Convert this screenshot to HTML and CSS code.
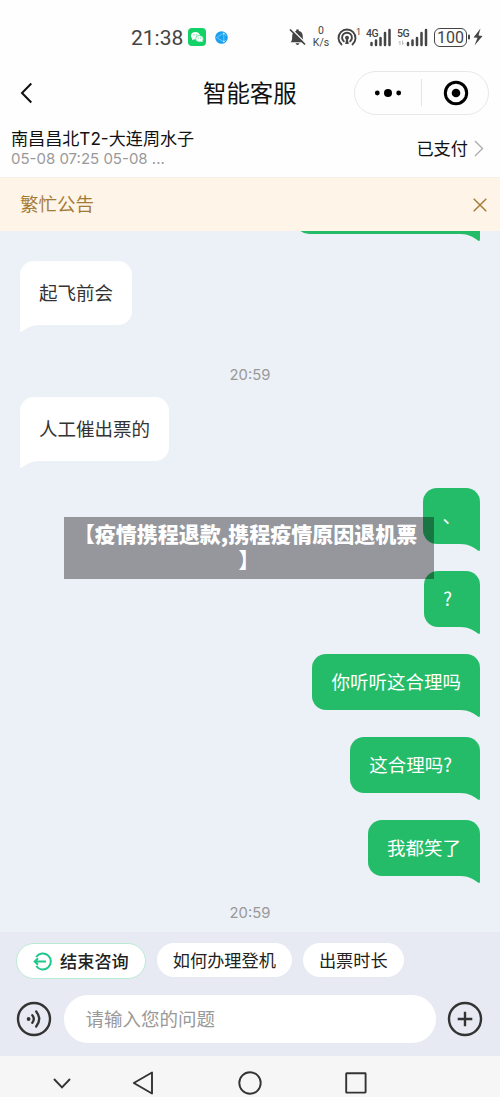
FILE: index.html
```html
<!DOCTYPE html>
<html lang="zh-CN">
<head>
<meta charset="utf-8">
<meta name="viewport" content="width=device-width, initial-scale=1">
<title>智能客服</title>
<link rel="stylesheet" href="styles.css">
</head>
<body>
<div class="phone">
  <header class="status">
    <span class="clock">21:38</span>
    <svg class="wechat" width="18" height="18" viewBox="0 0 18 18"><rect width="18" height="18" rx="4" fill="#12d267"/><ellipse cx="7.400" cy="7.700" rx="4.500" ry="3.800" fill="#fff"/><path d="M4.500 10l-.5 2.200 2.500-1.200z" fill="#fff"/><ellipse cx="11.500" cy="10.800" rx="3.900" ry="3.300" fill="#fff" stroke="#12d267" stroke-width=".6"/><path d="M12.500 13.300l2 1-.3-2z" fill="#fff"/><g fill="#12d267"><circle cx="5.900" cy="6.800" r=".6"/><circle cx="8.800" cy="6.800" r=".6"/><circle cx="10.200" cy="10.100" r=".5"/><circle cx="12.800" cy="10.100" r=".5"/></g></svg>
    <svg class="globe" width="13" height="13" viewBox="0 0 13 13"><circle cx="6.500" cy="6.500" r="6.300" fill="#1ba0ee"/><path d="M1.500 6.500L8.800 2.200V10.800zM8.800 2.200L11.500 5M8.800 10.800L11.300 9" fill="none" stroke="#7fd0fc" stroke-width=".8"/><circle cx="8.800" cy="2.500" r=".8" fill="#d8f3ff"/><circle cx="8.800" cy="10.500" r=".8" fill="#d8f3ff"/></svg>
    <span class="spacer"></span>
    <svg class="bell" width="17" height="18" viewBox="0 0 17 18"><path d="M1.500 14.200C3.500 12.600 3 10 3.200 7.400 3.500 4.700 5 3.300 7.200 2.900V1.500H9.800V2.900C12.300 3.400 13.600 5 13.700 7.600 13.800 10.500 13.800 12.700 15.500 14.200zM6.500 15.200H10.500Q10 17 8.500 17T6.500 15.200z" fill="#444"/><path d="M2.200 .8L17 15.600" stroke="#fff" stroke-width="1.400"/><path d="M1 1.500L16 16.500" stroke="#444" stroke-width="1.700"/></svg>
    <span class="speed"><span>0</span><span>K/s</span></span>
    <svg class="cast" width="24" height="20" viewBox="0 0 24 20"><g fill="none" stroke="#444" stroke-width="1.900" stroke-linecap="round"><path d="M4.500 17.500A8.500 8.500 0 1 1 15.500 17.500"/><path d="M6.800 14.300A4.900 4.900 0 1 1 13.200 14.300"/></g><circle cx="10" cy="10.800" r="2" fill="#444"/><path d="M9.200 12h1.600L11.800 17H8.200z" fill="#444"/><text x="19" y="8" class="cast-num">1</text></svg>
    <svg class="signal four" width="26" height="19" viewBox="0 0 26 19"><text x="0" y="9" class="net">4G</text><path d="M5.500 17v-2M10 17v-4.500M14.500 17v-7M19 17V5M23.500 17V2" stroke="#444" stroke-width="2.500" stroke-linecap="round" fill="none"/></svg>
    <svg class="signal five" width="31" height="19" viewBox="0 0 31 19"><text x="0" y="9" class="net">5G</text><path d="M3 17v-4l-1.300 1.500M5.500 12.500v4l1.300-1.500" stroke="#bbb" stroke-width="1" fill="none"/><path d="M11 17v-2M15.500 17v-4.500M20 17v-7M24.500 17V5M29 17V2" stroke="#444" stroke-width="2.500" stroke-linecap="round" fill="none"/></svg>
    <span class="battery">100</span>
    <svg class="bolt" width="15" height="18" viewBox="0 0 15 18"><rect x="0" y="6.500" width="2" height="5" rx="1" fill="#444"/><path d="M12.500 .5L5.500 9.500l4 .3L6.500 17.500l8-9.500-4-.5z" fill="#444"/></svg>
  </header>

  <nav class="titlebar">
    <svg class="back" width="14" height="22" viewBox="0 0 14 22"><path d="M11.300 1.500L2 11l9.300 9.500" fill="none" stroke="#111" stroke-width="2"/></svg>
    <h1 class="title">智能客服</h1>
    <div class="capsule">
      <svg width="28" height="10" viewBox="0 0 28 10"><circle cx="3.300" cy="5" r="2.400"/><circle cx="14" cy="5" r="4"/><circle cx="24.700" cy="5" r="2.400"/></svg>
      <span class="divider"></span>
      <svg width="26" height="26" viewBox="0 0 26 26"><circle cx="13" cy="13" r="10.700" fill="none" stroke="#000" stroke-width="3"/><circle cx="13" cy="13" r="4.300"/></svg>
    </div>
  </nav>

  <section class="trip">
    <div class="trip-info">
      <div class="route">南昌昌北T2-大连周水子</div>
      <div class="dates">05-08 07:25 05-08 ...</div>
    </div>
    <div class="paid">已支付<svg width="10" height="17" viewBox="0 0 10 17"><path d="M1 1l7.500 7.500L1 16" fill="none" stroke="#aaa" stroke-width="1.300"/></svg></div>
  </section>

  <section class="notice">
    <span class="notice-text">繁忙公告</span>
    <svg width="14" height="14" viewBox="0 0 14 14"><path d="M.7.7l12.600 12.600M13.300.7L.7 13.300" stroke="#a87d3b" stroke-width="1.500"/></svg>
  </section>

  <main class="chat">
    <div class="bubble sent clipped"></div>
    <div class="bubble received">起飞前会</div>
    <time class="stamp mid">20:59</time>
    <div class="bubble received">人工催出票的</div>
    <div class="bubble sent lead">、</div>
    <div class="bubble sent asking">?</div>
    <div class="bubble sent">你听听这合理吗</div>
    <div class="bubble sent asking">这合理吗?</div>
    <div class="bubble sent">我都笑了</div>
    <time class="stamp last">20:59</time>
    <div class="caption"><span class="caption-line">【疫情携程退款,携程疫情原因退机票</span><span class="caption-line end">】</span></div>
  </main>

  <footer class="composer">
    <div class="chips">
      <button class="chip finish"><svg width="19" height="19" viewBox="0 0 19 19"><path d="M3.200 5A8 8 0 1 1 3.200 14M13 9.500H2M5 6.300L1.700 9.500 5 12.700" fill="none" stroke="#22c58b" stroke-width="2"/></svg>结束咨询</button>
      <button class="chip">如何办理登机</button>
      <button class="chip">出票时长</button>
    </div>
    <div class="entry">
      <svg width="36" height="36" viewBox="0 0 36 36"><circle cx="18" cy="18" r="16" fill="none" stroke="#333" stroke-width="2.400"/><circle cx="12.600" cy="18" r="1.900" fill="#333"/><path d="M16.300 14.200Q19.300 18 16.300 21.800M20.200 10.500Q26.200 18 20.200 25.500" fill="none" stroke="#333" stroke-width="2.300" stroke-linecap="round"/></svg>
      <div class="field">请输入您的问题</div>
      <svg width="36" height="36" viewBox="0 0 36 36"><circle cx="18" cy="18" r="16" fill="none" stroke="#333" stroke-width="2.400"/><path d="M18 10.700v14.600M10.700 18h14.600" stroke="#333" stroke-width="2.400"/></svg>
    </div>
  </footer>

  <div class="system">
    <svg class="hide" width="18" height="11" viewBox="0 0 18 11"><path d="M1 1l8 8.300L17 1" fill="none" stroke="#333" stroke-width="1.900"/></svg>
    <svg class="prev" width="22" height="24" viewBox="0 0 22 24"><path d="M20 1.500v21L1.800 12z" fill="none" stroke="#333" stroke-width="1.900" stroke-linejoin="round"/></svg>
    <svg class="home" width="24" height="24" viewBox="0 0 24 24"><circle cx="12" cy="12" r="10.700" fill="none" stroke="#333" stroke-width="1.900"/></svg>
    <svg class="recent" width="22" height="22" viewBox="0 0 22 22"><rect x="1.200" y="1.200" width="19.400" height="19.400" rx=".5" fill="none" stroke="#333" stroke-width="1.900"/></svg>
  </div>
</div>
</body>
</html>
```
FILE: styles.css
```css
* { box-sizing: border-box; }
body { margin: 0; font-family: "Noto Sans CJK SC", sans-serif; color: #222; }
svg { display: block; flex: none; }
.phone { width: 500px; height: 1097px; display: flex; flex-direction: column; overflow: hidden; background: #fefefe; }

.status { height: 70px; flex: none; display: flex; align-items: center; padding: 4px 17px 0 131px; color: #444; }
.clock { font: 400 21px/26px Roboto, sans-serif; width: 57px; padding-top: 1px; white-space: nowrap; }
.globe { margin-left: 9px; }
.spacer { flex: 1; }
.speed { display: flex; flex-direction: column; align-items: center; width: 18px; margin: 0 7px 0 6px; font: 400 10.500px/12px Roboto, sans-serif; }
.cast-num { font: 9px Roboto, sans-serif; fill: #444; }
.signal { margin-left: 5px; }
.net { font: 500 10.500px Roboto, sans-serif; fill: #444; letter-spacing: -.5px; }
.battery { width: 33px; height: 19px; margin-left: 6px; border: 1.500px solid #444; border-radius: 6px; font: 400 16px/17px Roboto, sans-serif; text-align: center; }
.bolt { margin-left: 1px; }

.titlebar { height: 45px; flex: none; display: flex; align-items: center; padding: 0 11px 0 20px; }
.title { margin: 0 0 2px 169px; flex: 1; font-size: 23.400px; line-height: 34px; font-weight: 400; color: #111; }
.capsule { width: 135px; height: 44px; display: flex; align-items: center; padding: 0 19px; border: 1px solid #e8e8e8; border-radius: 22px; }
.divider { width: 1px; height: 27px; background: #e4e4e4; margin: 0 21px 0 19px; }

.trip { height: 62px; flex: none; display: flex; justify-content: space-between; align-items: center; padding: 6px 16px 0 11px; }
.route { font-family: Inter, "Noto Sans CJK SC", sans-serif; font-size: 17.100px; line-height: 20px; color: #111; }
.dates { font: 400 15px/20px Inter, sans-serif; color: #999; }
.paid { display: flex; align-items: center; gap: 6px; font-size: 17.200px; line-height: 24px; padding-bottom: 2px; color: #111; }

.notice { height: 54px; flex: none; display: flex; justify-content: space-between; align-items: center; padding: 0 13px 0 20px; background: #fef5e8; border-top: 1px solid #f5f1e9; color: #a47b35; font-size: 18.500px; }
.notice-text { padding-bottom: 3px; }

.chat { position: relative; height: 701px; flex: none; overflow: hidden; display: flex; flex-direction: column; padding: 0 20px; background: #ecf0f7; }
.bubble { position: relative; flex: none; width: max-content; padding: 0 19px; font-size: 18.500px; }
.bubble::after { content: ""; position: absolute; top: 100%; width: 20px; height: 7px; background: inherit; }
.received { height: 64px; line-height: 62px; border-radius: 14px 14px 14px 0; background: #fff; color: #333; }
.received::after { left: 0; clip-path: path("M20 0C11 0 7 3 2 6.500Q0 8 0 5V0Z"); }
.sent { height: 56px; line-height: 55px; margin-bottom: 27px; align-self: flex-end; border-radius: 14px 14px 0 14px; background: #25bc69; color: #fff; }
.sent::after { right: 0; clip-path: path("M0 0C9 0 13 3 18 6.500Q20 8 20 5V0Z"); }
.asking { padding-right: 28px; }
.clipped { width: 185px; margin-top: -53px; }
.stamp { align-self: center; height: 20px; font: 400 14.800px/20px Inter, sans-serif; color: #999; }
.mid { margin: 40px 0 12px; }
.lead { margin-top: 27px; }
.last { margin-top: 0; }
.caption { position: absolute; left: 64px; top: 286px; width: 370px; height: 62px; padding-top: 3px; display: flex; flex-direction: column; align-items: center; background: rgba(0,0,0,.37); color: #fff; font-size: 21px; font-weight: 900; line-height: 26px; white-space: nowrap; }
.caption-line { margin-right: 7px; }
.caption-line.end { margin-right: 0; }

.composer { height: 124px; flex: none; background: #e7eaf2; padding: 11px 16px 0; }
.chips { display: flex; gap: 11px; align-items: flex-start; }
.chip { height: 34px; padding: 0 16px; border: 0; border-radius: 17px; background: #fff; color: #222; font: 400 17.200px/32px "Noto Sans CJK SC", sans-serif; white-space: nowrap; }
.finish { height: 36px; padding: 0 16px; border: 1px solid #b9ebd3; border-radius: 18px; display: flex; align-items: center; gap: 8px; font-weight: 500; }
.entry { display: flex; align-items: center; justify-content: space-between; margin: 16px 1px 0 0; }
.field { width: 372px; height: 48px; padding-left: 22px; border-radius: 24px; background: #fff; color: #999; font-size: 18.500px; line-height: 46px; }

.system { height: 41px; flex: none; display: flex; align-items: center; padding: 13px 0 0 53px; background: #f6f6f6; }
.prev { margin-left: 61px; }
.home { margin-left: 84px; }
.recent { margin-left: 83px; }
```
